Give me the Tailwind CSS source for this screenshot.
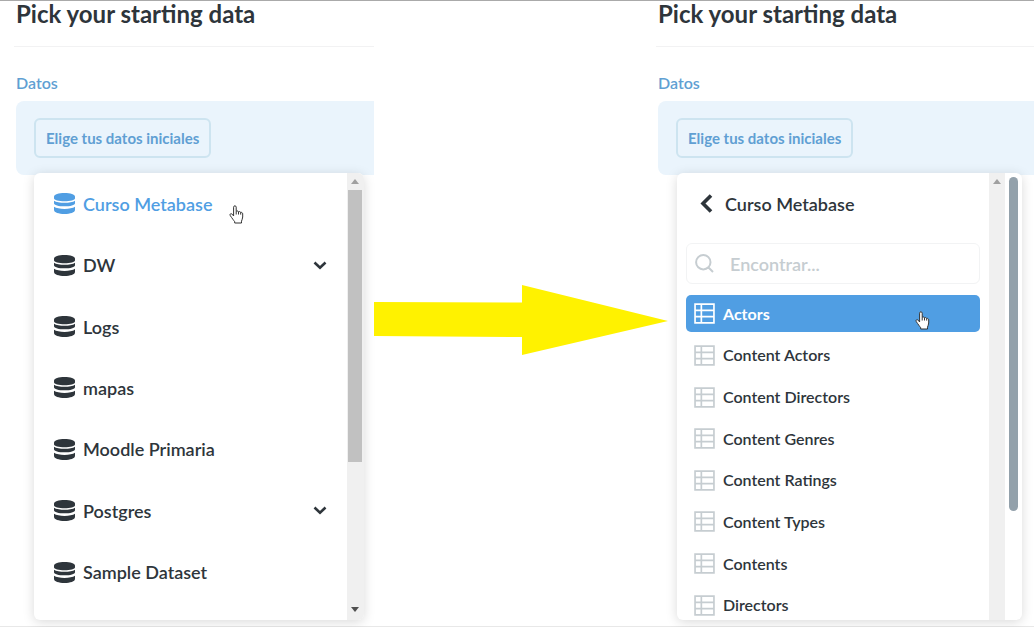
<!DOCTYPE html>
<html lang="es">
<head>
  <meta charset="utf-8">
  <meta name="viewport" content="width=device-width, initial-scale=1">
  <title>Pick your starting data</title>
  <script src="https://cdn.jsdelivr.net/npm/@tailwindcss/browser@4"></script>
</head>
<body class="min-h-screen overflow-hidden bg-white font-['Lato',sans-serif] text-[#2e353b]">
  <svg class="hidden">
    <symbol id="database" viewBox="0 0 20 20">
      <path d="M10 0C4.500 0 0 1.500 0 3.400V5C0 6.700 4.500 7.900 10 7.900S20 6.700 20 5V3.400C20 1.500 15.500 0 10 0z"/>
      <path d="M0 7.300c2 1.300 5.600 2 10 2s8-.7 10-2v2.400c0 1.900-4.500 3-10 3s-10-1.100-10-3z"/>
      <path d="M0 13.200c2 1.300 5.600 2 10 2s8-.7 10-2v3C20 18.500 15.500 20 10 20S0 18.500 0 16.200z"/>
    </symbol>
    <symbol id="table" viewBox="0 0 20 20">
      <path d="M1 1h18v18H1zM1 7h18M1 13h18M7 1v18" fill="none" stroke="currentColor" stroke-width="1.600"/>
    </symbol>
    <symbol id="chevron-down" viewBox="0 0 14 9">
      <path d="M1.500 1.500 7 6.700l5.500-5.200" fill="none" stroke="currentColor" stroke-width="2.600"/>
    </symbol>
    <symbol id="hand" viewBox="0 0 15 19">
      <path d="M4.600 11V2.200c0-1.900 2.600-1.900 2.600 0v4.300c.5-.9 2.200-.7 2.300.5.600-.8 2.100-.5 2.200.6.700-.6 2 0 2 1.200V12c0 1.800-1 2.900-1.200 4.200V18H5.700v-1.300C4.500 15.300 3.300 13.400 1.300 10.700.3 9.100 2 8 3.200 9.200z" fill="#fff" stroke="#333" stroke-linejoin="round"/>
      <path d="M7.200 6.500v3M9.500 7v2.500M11.700 7.600v2" fill="none" stroke="#333"/>
    </symbol>
  </svg>

  <div class="grid min-h-screen grid-cols-[374fr_284fr_376fr] border-t border-b border-t-[#aaa] border-b-[#e8e8e8]">
    <!-- Database list -->
    <section>
      <h1 class="pl-4 text-2xl leading-[26px] font-bold">Pick your starting data</h1>
      <hr class="mt-[19px] ml-3.5 border-[#f2f2f3]">
      <h2 class="mt-[26px] pl-4 text-base leading-5 font-semibold text-[#609fd3]">Datos</h2>
      <div class="mt-2 ml-4 rounded-l-lg bg-[#eaf4fc] px-[18px] py-[17px]">
        <button type="button" class="block h-10 rounded-md border-2 border-[#cde4f0] px-[10px] text-[15px] font-bold text-[#609fd3]">Elige tus datos iniciales</button>
      </div>
      <div class="relative mr-[10px] -mt-[2px] ml-[34px] flex overflow-hidden rounded-md bg-white shadow-[0_2px_12px_rgba(0,0,0,0.15)]">
        <ul class="mb-[17px] grid h-[430px] flex-1 auto-rows-fr px-5 text-lg font-semibold">
          <li class="relative flex">
            <button type="button" class="flex w-full items-center gap-2 text-left text-[#509ee3]"><svg class="size-[21px] fill-current"><use href="#database"/></svg>Curso Metabase</button>
            <svg class="absolute top-8 left-[175px] h-[19px] w-[15px]"><use href="#hand"/></svg>
          </li>
          <li class="flex"><button type="button" class="flex w-full items-center gap-2 text-left"><svg class="size-[21px] fill-current"><use href="#database"/></svg>DW<svg class="ml-auto h-[9px] w-[14px]"><use href="#chevron-down"/></svg></button></li>
          <li class="flex"><button type="button" class="flex w-full items-center gap-2 text-left"><svg class="size-[21px] fill-current"><use href="#database"/></svg>Logs</button></li>
          <li class="flex"><button type="button" class="flex w-full items-center gap-2 text-left"><svg class="size-[21px] fill-current"><use href="#database"/></svg>mapas</button></li>
          <li class="flex"><button type="button" class="flex w-full items-center gap-2 text-left"><svg class="size-[21px] fill-current"><use href="#database"/></svg>Moodle Primaria</button></li>
          <li class="flex"><button type="button" class="flex w-full items-center gap-2 text-left"><svg class="size-[21px] fill-current"><use href="#database"/></svg>Postgres<svg class="ml-auto h-[9px] w-[14px]"><use href="#chevron-down"/></svg></button></li>
          <li class="flex"><button type="button" class="flex w-full items-center gap-2 text-left"><svg class="size-[21px] fill-current"><use href="#database"/></svg>Sample Dataset</button></li>
        </ul>
        <div class="flex w-[17px] flex-col items-center bg-[#f0f0f0] pr-0.5">
          <svg class="my-[6px] h-[5px] w-2" viewBox="0 0 8 5"><path d="M0 5 4 0l4 5z" fill="#a0a0a0"/></svg>
          <div class="h-[272px] w-[14px] bg-[#c1c1c1]"></div>
          <svg class="mt-auto mb-2 h-[5px] w-2" viewBox="0 0 8 5"><path d="M0 0h8L4 5z" fill="#505050"/></svg>
        </div>
      </div>
    </section>

    <svg class="relative z-10 mt-[284px] -mr-[10px] h-[70px] w-[calc(100%+10px)]" viewBox="0 0 294 70" preserveAspectRatio="none">
      <path d="M0 17l148 .500V0l146 36-146 34V52L0 51z" fill="#fff200"/>
    </svg>

    <!-- Table list of the chosen database -->
    <section>
      <h1 class="text-2xl leading-[26px] font-bold">Pick your starting data</h1>
      <hr class="mt-[19px] -ml-0.5 border-[#f2f2f3]">
      <h2 class="mt-[26px] text-base leading-5 font-semibold text-[#609fd3]">Datos</h2>
      <div class="mt-2 rounded-l-lg bg-[#eaf4fc] px-[18px] py-[17px]">
        <button type="button" class="block h-10 rounded-md border-2 border-[#cde4f0] px-[10px] text-[15px] font-bold text-[#609fd3]">Elige tus datos iniciales</button>
      </div>
      <div class="relative mr-3 -mt-[2px] ml-[19px] flex h-[447px] overflow-hidden rounded-md bg-white shadow-[0_2px_12px_rgba(0,0,0,0.15)]">
        <div class="flex-1 px-[9px]">
          <button type="button" class="flex h-[61px] w-full items-center gap-3 pl-[14px] text-left text-lg font-semibold"><svg class="h-[19px] w-[13px]" viewBox="0 0 13 19"><path d="M11 1.500 3 9.500l8 8" fill="none" stroke="currentColor" stroke-width="3.600"/></svg>Curso Metabase</button>
          <label class="mt-[9px] flex h-[41px] items-center gap-4 rounded-md border border-[#f2f3f4] pl-2 text-[#c6cdd1]">
            <svg class="size-[19px] shrink-0" viewBox="0 0 19 19"><path d="M13.500 13.500 18 18M15.500 8.200a7.200 7.200 0 1 1-14.400 0 7.200 7.200 0 0 1 14.400 0z" fill="none" stroke="currentColor" stroke-width="2"/></svg>
            <input type="text" aria-label="Encontrar" placeholder="Encontrar..." class="w-full min-w-0 text-lg font-semibold outline-none placeholder:text-[#c6cdd1]">
          </label>
          <ul class="mt-[9px] grid h-[333px] auto-rows-fr items-center text-base font-semibold">
            <li class="relative">
              <button type="button" class="flex h-[37px] w-full items-center gap-2 rounded-[5px] bg-[#509ee3] px-2 text-left font-bold text-white"><svg class="size-[21px]"><use href="#table"/></svg>Actors</button>
              <svg class="absolute top-4 right-[50px] h-[19px] w-[15px]"><use href="#hand"/></svg>
            </li>
            <li><button type="button" class="flex h-[37px] w-full items-center gap-2 px-2 text-left"><svg class="size-[21px] text-[#c6cdd1]"><use href="#table"/></svg>Content Actors</button></li>
            <li><button type="button" class="flex h-[37px] w-full items-center gap-2 px-2 text-left"><svg class="size-[21px] text-[#c6cdd1]"><use href="#table"/></svg>Content Directors</button></li>
            <li><button type="button" class="flex h-[37px] w-full items-center gap-2 px-2 text-left"><svg class="size-[21px] text-[#c6cdd1]"><use href="#table"/></svg>Content Genres</button></li>
            <li><button type="button" class="flex h-[37px] w-full items-center gap-2 px-2 text-left"><svg class="size-[21px] text-[#c6cdd1]"><use href="#table"/></svg>Content Ratings</button></li>
            <li><button type="button" class="flex h-[37px] w-full items-center gap-2 px-2 text-left"><svg class="size-[21px] text-[#c6cdd1]"><use href="#table"/></svg>Content Types</button></li>
            <li><button type="button" class="flex h-[37px] w-full items-center gap-2 px-2 text-left"><svg class="size-[21px] text-[#c6cdd1]"><use href="#table"/></svg>Contents</button></li>
            <li><button type="button" class="flex h-[37px] w-full items-center gap-2 px-2 text-left"><svg class="size-[21px] text-[#c6cdd1]"><use href="#table"/></svg>Directors</button></li>
          </ul>
        </div>
        <div class="flex w-4 justify-center bg-[#f0f0f0] pt-[6px]">
          <svg class="h-[5px] w-2" viewBox="0 0 8 5"><path d="M0 5 4 0l4 5z" fill="#a0a0a0"/></svg>
        </div>
        <div class="w-[17px] px-1 pt-1">
          <div class="h-[334px] rounded-full bg-[#93a1ab]"></div>
        </div>
      </div>
    </section>
  </div>
</body>
</html>
